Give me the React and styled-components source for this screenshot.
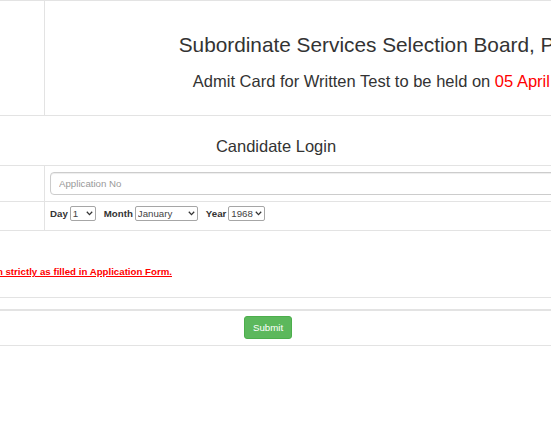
import React from 'react';
import styled, { createGlobalStyle } from 'styled-components';

const Global = createGlobalStyle`
  html, body { margin: 0; padding: 0; background: #fff; overflow: hidden; }
  body { font-family: "Liberation Sans", Arial, sans-serif; color: #333; }
  * { box-sizing: border-box; }
`;

const LINE = '#e3e3e3';

const Viewport = styled.div`
  width: 100%;
  overflow: hidden;
`;

const Sheet = styled.div`
  width: 952px;
  margin-left: -200px;
  border-top: 1px solid ${LINE};
`;

const SplitRow = styled.div`
  display: grid;
  grid-template-columns: 245px 1fr;
  height: ${p => p.$h}px;
  border-bottom: 1px solid ${LINE};
`;

const LabelCell = styled.div`
  border-right: 1px solid ${LINE};
`;

const FieldCell = styled.div`
  display: flex;
  align-items: flex-start;
  padding: ${p => p.$pad};
  min-width: 0;
`;

const HeaderCell = styled.div`
  padding: 32px 13px 0 0;
  text-align: center;
  white-space: nowrap;
`;

const Title = styled.h1`
  margin: 0;
  font-size: 20.8px;
  line-height: 24px;
  font-weight: normal;
  color: #333;
`;

const Subtitle = styled.h2`
  margin: 13.5px 0 0;
  font-size: 16.5px;
  line-height: 20px;
  font-weight: normal;
  color: #333;
`;

const Red = styled.span`
  color: #ff0000;
`;

const FullRow = styled.div`
  height: ${p => p.$h}px;
  border-bottom: ${p => p.$bw || 1}px solid ${LINE};
  padding-top: ${p => p.$pt || 0}px;
`;

const SectionTitle = styled.div`
  text-align: center;
  font-size: 16.5px;
  line-height: 20px;
  color: #333;
`;

const TextInput = styled.input`
  width: 100%;
  height: 23px;
  border: 1px solid #ccc;
  border-radius: 4px;
  padding: 0 8px;
  font-family: inherit;
  font-size: 9.7px;
  color: #555;
  box-shadow: inset 0 1px 1px rgba(0, 0, 0, 0.075);
  outline: none;
  &::placeholder { color: #999; }
`;

const DateLine = styled.div`
  display: flex;
  align-items: center;
  gap: 8px;
`;

const DateGroup = styled.label`
  display: flex;
  align-items: center;
  gap: 2px;
  font-size: 9.7px;
  font-weight: bold;
  color: #333;
`;

const PickerWrap = styled.span`
  position: relative;
  display: inline-flex;
`;

const Picker = styled.select`
  appearance: none;
  -webkit-appearance: none;
  width: ${p => p.$w}px;
  height: 15px;
  padding: 0 11px 0 2px;
  border: 1px solid #a6a6a6;
  border-radius: 2px;
  font-family: inherit;
  font-size: 9.7px;
  font-weight: normal;
  line-height: 13px;
  color: #444;
  background: #fff;
  outline: none;
`;

const Chevron = styled.svg`
  position: absolute;
  right: 3px;
  top: 5px;
  width: 7px;
  height: 5px;
  pointer-events: none;
`;

const NoteBox = styled.div`
  width: 372px;
  display: flex;
  justify-content: flex-end;
`;

const Note = styled.span`
  white-space: nowrap;
  font-size: 9.7px;
  line-height: 12px;
  font-weight: bold;
  color: #ff0000;
  text-decoration: underline;
`;

const SubmitRow = styled.div`
  height: 35px;
  border-bottom: 1px solid ${LINE};
  display: flex;
  justify-content: center;
  align-items: flex-start;
  padding: 5px 16px 0 0;
`;

const SubmitButton = styled.button`
  width: 48px;
  height: 23px;
  padding: 0;
  background: #5cb85c;
  border: 1px solid #4cae4c;
  border-radius: 3px;
  color: #fff;
  font-family: inherit;
  font-size: 9.7px;
  cursor: pointer;
`;

const days = Array.from({ length: 31 }, (_, i) => i + 1);
const months = ['January', 'February', 'March', 'April', 'May', 'June', 'July', 'August', 'September', 'October', 'November', 'December'];
const years = Array.from({ length: 40 }, (_, i) => 1968 + i);

function DropDown({ width, value, items }) {
  return (
    <PickerWrap>
      <Picker $w={width} defaultValue={value}>
        {items.map(v => <option key={v}>{v}</option>)}
      </Picker>
      <Chevron viewBox="0 0 7 5">
        <path d="M0.8 0.8 L3.5 3.6 L6.2 0.8" fill="none" stroke="#333" strokeWidth="1.3" />
      </Chevron>
    </PickerWrap>
  );
}

export default function App() {
  return (
    <Viewport>
      <Global />
      <Sheet>
        <SplitRow $h={115}>
          <LabelCell />
          <HeaderCell>
            <Title>Subordinate Services Selection Board, Punjab</Title>
            <Subtitle>
              Admit Card for Written Test to be held on <Red>05 April 2020</Red>
            </Subtitle>
          </HeaderCell>
        </SplitRow>

        <FullRow $h={50} $pt={20}>
          <SectionTitle>Candidate Login</SectionTitle>
        </FullRow>

        <SplitRow $h={36}>
          <LabelCell />
          <FieldCell $pad="6px 0 0 5px">
            <TextInput placeholder="Application No" />
          </FieldCell>
        </SplitRow>

        <SplitRow $h={29}>
          <LabelCell />
          <FieldCell $pad="4px 0 0 5px">
            <DateLine>
              <DateGroup>
                Day
                <DropDown width={26} value="1" items={days} />
              </DateGroup>
              <DateGroup>
                Month
                <DropDown width={63} value="January" items={months} />
              </DateGroup>
              <DateGroup>
                Year
                <DropDown width={37} value="1968" items={years} />
              </DateGroup>
            </DateLine>
          </FieldCell>
        </SplitRow>

        <FullRow $h={67} $pt={35}>
          <NoteBox>
            <Note>Note: Enter Date of Birth as per Matriculation strictly as filled in Application Form.</Note>
          </NoteBox>
        </FullRow>

        <FullRow $h={13} $bw={2} />

        <SubmitRow>
          <SubmitButton type="button">Submit</SubmitButton>
        </SubmitRow>
      </Sheet>
    </Viewport>
  );
}
